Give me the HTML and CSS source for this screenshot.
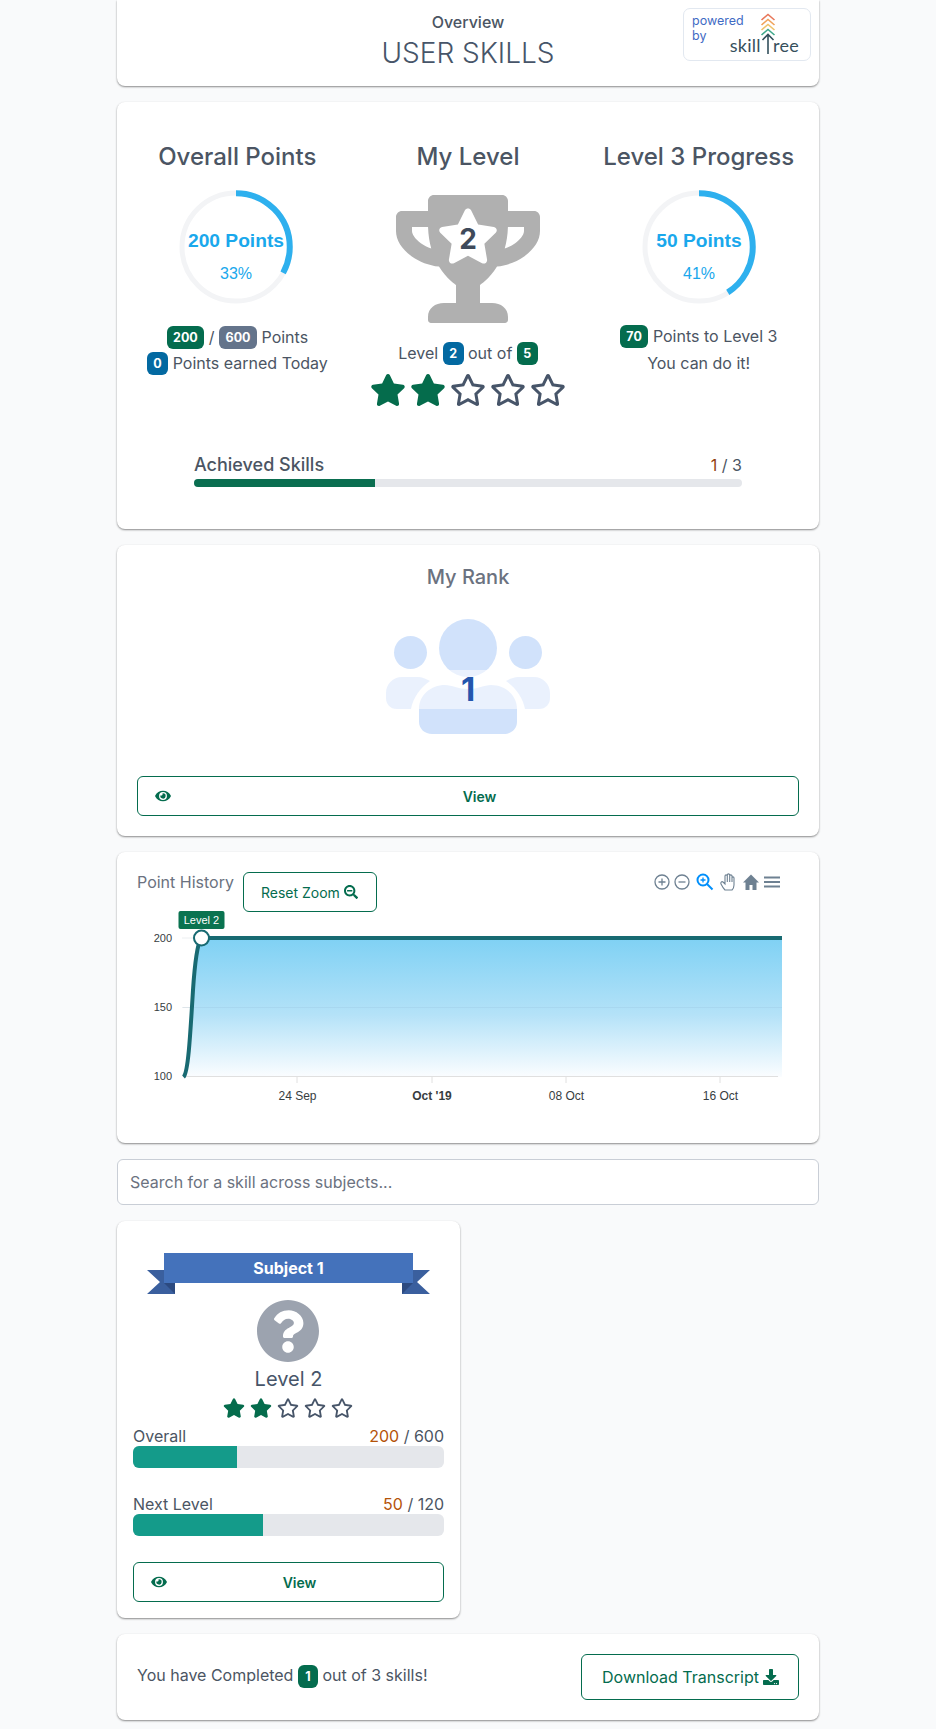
FILE: index.html
```html
<!DOCTYPE html>
<html lang="en">
<head>
<meta charset="utf-8">
<title>User Skills</title>
<link rel="stylesheet" href="styles.css">
</head>
<body>
<svg class="defs" width="0" height="0">
  <defs>
    <symbol id="star" viewBox="0 0 576 512"><path d="M259.3 17.8L194 150.2 47.9 171.5c-26.2 3.8-36.7 36.1-17.7 54.6l105.7 103-25 145.5c-4.5 26.3 23.2 46 46.4 33.7L288 439.6l130.7 68.7c23.2 12.2 50.9-7.4 46.4-33.7l-25-145.5 105.7-103c19-18.5 8.5-50.8-17.7-54.6L382 150.2 316.7 17.8c-11.7-23.6-45.6-23.9-57.4 0z"/></symbol>
    <symbol id="star-o" viewBox="0 0 576 512"><path d="M528.1 171.5L382 150.2 316.7 17.8c-11.7-23.6-45.6-23.9-57.4 0L194 150.2 47.9 171.5c-26.2 3.8-36.7 36.1-17.7 54.6l105.7 103-25 145.5c-4.5 26.3 23.2 46 46.4 33.7L288 439.6l130.7 68.7c23.2 12.2 50.9-7.4 46.4-33.7l-25-145.5 105.7-103c19-18.5 8.5-50.8-17.7-54.6zM388.6 312.3l23.7 138.4L288 385.4l-124.3 65.3 23.7-138.4-100.6-98 139-20.2 62.2-126 62.2 126 139 20.2-100.6 98z"/></symbol>
    <symbol id="eye" viewBox="0 0 576 512"><path d="M572.52 241.4C518.29 135.59 410.93 64 288 64S57.68 135.64 3.48 241.41a32.35 32.35 0 0 0 0 29.19C57.71 376.41 165.07 448 288 448s230.32-71.64 284.52-177.41a32.35 32.35 0 0 0 0-29.19zM288 400a144 144 0 1 1 144-144 143.93 143.93 0 0 1-144 144zm0-240a95.31 95.31 0 0 0-25.31 3.79 47.85 47.85 0 0 1-66.9 66.9A95.78 95.78 0 1 0 288 160z"/></symbol>
  </defs>
</svg>
<main class="page">
  <section class="card head-card">
    <div></div>
    <div class="head-titles">
      <div class="head-over">Overview</div>
      <h1 class="head-title">USER SKILLS</h1>
    </div>
    <div class="powered">
      <div class="powered-text">powered<br>by</div>
      <div class="logo">
        <span class="logo-word">skill</span>
        <svg class="logo-mark" width="16" height="44" viewBox="0 0 16 44" fill="none" stroke-width="1.6">
          <path d="M1.5 7 8 1.5 14.500 7" stroke="#e8775a"/>
          <path d="M1.5 12 8 6.500 14.500 12" stroke="#f0a35a"/>
          <path d="M1.5 17 8 11.500 14.500 17" stroke="#eec26a"/>
          <path d="M1.5 22 8 16.500 14.500 22" stroke="#3fa98c"/>
          <path d="M2.500 27 8 21.500 13.500 27M8 22V41" stroke="#33505c"/>
        </svg>
        <span class="logo-word">ree</span>
      </div>
    </div>
  </section>

  <section class="card stats-card">
    <div class="stats-grid">
      <div class="stat-col">
        <h2 class="stat-title">Overall Points</h2>
        <svg class="donut donut-left" width="114" height="114" viewBox="0 0 114 114">
          <circle class="donut-track" cx="57" cy="57" r="54"/>
          <circle class="donut-value" cx="57" cy="57" r="53.750" pathLength="100" stroke-dasharray="33 100" transform="rotate(-90 57 57)"/>
          <text class="donut-main" x="57" y="50">200 Points</text>
          <text class="donut-sub" x="57" y="89">33%</text>
        </svg>
        <div class="stat-lines lines-left">
          <div><span class="badge badge-green">200</span> / <span class="badge badge-gray">600</span> Points</div>
          <div><span class="badge badge-blue">0</span> Points earned Today</div>
        </div>
      </div>
      <div class="stat-col">
        <h2 class="stat-title">My Level</h2>
        <div class="trophy">
          <svg width="144" height="128" viewBox="0 0 576 512"><path fill="#b0b0b0" d="M552 64H448V24c0-13.300-10.700-24-24-24H152c-13.300 0-24 10.700-24 24v40H24C10.700 64 0 74.700 0 88v56c0 35.700 22.500 72.400 61.900 100.700 31.500 22.700 69.800 37.100 110 41.700C203.300 338.500 240 360 240 360v72h-48c-35.300 0-64 20.700-64 56v12c0 6.600 5.400 12 12 12h296c6.600 0 12-5.400 12-12v-12c0-35.300-28.700-56-64-56h-48v-72s36.700-21.500 68.100-73.600c40.300-4.600 78.600-19 110-41.700 39.300-28.300 61.900-65 61.900-100.700V88c0-13.300-10.700-24-24-24zM99.300 192.800C74.900 175.200 64 155.600 64 144v-16h64.200c1 32.600 5.800 61.200 12.800 86.200-15.100-5.200-29.200-12.400-41.700-21.400zM512 144c0 16.100-17.700 36.100-35.300 48.800-12.500 9-26.700 16.200-41.800 21.400 7-25 11.800-53.600 12.800-86.200H512v16z"/></svg>
          <svg class="trophy-star" width="62" height="56" fill="#fff"><use href="#star"/></svg>
          <span class="trophy-num">2</span>
        </div>
        <div class="stat-lines lines-mid">
          <div>Level <span class="badge badge-blue">2</span> out of <span class="badge badge-green">5</span></div>
        </div>
        <div class="stars stars-lg">
          <svg class="star-on"><use href="#star"/></svg>
          <svg class="star-on"><use href="#star"/></svg>
          <svg class="star-off"><use href="#star-o"/></svg>
          <svg class="star-off"><use href="#star-o"/></svg>
          <svg class="star-off"><use href="#star-o"/></svg>
        </div>
      </div>
      <div class="stat-col">
        <h2 class="stat-title">Level 3 Progress</h2>
        <svg class="donut" width="114" height="114" viewBox="0 0 114 114">
          <circle class="donut-track" cx="57" cy="57" r="54"/>
          <circle class="donut-value" cx="57" cy="57" r="53.750" pathLength="100" stroke-dasharray="41 100" transform="rotate(-90 57 57)"/>
          <text class="donut-main" x="57" y="50">50 Points</text>
          <text class="donut-sub" x="57" y="89">41%</text>
        </svg>
        <div class="stat-lines lines-right">
          <div><span class="badge badge-green">70</span> Points to Level 3</div>
          <div>You can do it!</div>
        </div>
      </div>
    </div>
    <div class="achieved">
      <div class="achieved-row">
        <span class="achieved-label">Achieved Skills</span>
        <span><span class="num-achieved">1</span> / 3</span>
      </div>
      <div class="thin-bar"><div class="thin-fill" style="width:33%"></div></div>
    </div>
  </section>

  <section class="card rank-card">
    <h2 class="rank-title">My Rank</h2>
    <svg class="rank-icon" width="164" height="116" viewBox="386 619 164 116">
      <defs>
        <linearGradient id="rankfill" gradientUnits="userSpaceOnUse" x1="0" y1="619" x2="0" y2="735">
          <stop offset="0.44" stop-color="#d1e2fb"/><stop offset="0.44" stop-color="#eaf1fd"/>
          <stop offset="0.776" stop-color="#eaf1fd"/><stop offset="0.776" stop-color="#d1e2fb"/>
        </linearGradient>
      </defs>
      <g fill="url(#rankfill)">
        <circle cx="468" cy="648" r="29"/>
        <circle cx="410.500" cy="652.500" r="16.500"/>
        <circle cx="525.500" cy="652.500" r="16.500"/>
        <path d="M419 709C419 695 431 685 445 685C452 685 458 689 468 689C478 689 484 685 491 685C505 685 517 695 517 709V722C517 729 511 734 504 734H432C425 734 419 729 419 722Z"/>
        <path d="M386 693C386 684 393 677 402 677H418C422 677 426 679 430 681C420 688 413 698 411 709H397C390 709 386 704 386 698Z"/>
        <path d="M550 693C550 684 543 677 534 677H518C514 677 510 679 506 681C516 688 523 698 525 709H539C546 709 550 704 550 698Z"/>
      </g>
      <text class="rank-num" x="468" y="701">1</text>
    </svg>
    <a class="btn btn-view">
      <svg class="btn-eye" fill="currentColor"><use href="#eye"/></svg>
      <span class="btn-view-label">View</span>
    </a>
  </section>

  <section class="card history-card">
    <div class="history-head">
      <span class="history-title">Point History</span>
      <a class="btn btn-reset">Reset Zoom
        <svg width="14" height="14" viewBox="0 0 512 512" fill="currentColor"><path d="M304 192v32c0 6.600-5.400 12-12 12H124c-6.600 0-12-5.400-12-12v-32c0-6.600 5.400-12 12-12h168c6.600 0 12 5.400 12 12zm201 284.700L476.700 505c-9.400 9.400-24.600 9.400-33.900 0L343 405.300c-4.500-4.500-7-10.600-7-17V372c-35.300 27.600-79.700 44-128 44C93.100 416 0 322.900 0 208S93.100 0 208 0s208 93.100 208 208c0 48.300-16.400 92.700-44 128h16.300c6.400 0 12.500 2.500 17 7l99.700 99.700c9.300 9.400 9.300 24.600 0 34zM344 208c0-75.200-60.800-136-136-136S72 132.800 72 208s60.800 136 136 136 136-60.800 136-136z"/></svg>
      </a>
      <svg class="toolbar" width="130" height="22" viewBox="0 0 130 22" fill="none" stroke="#6e8192" stroke-width="1.300">
        <circle cx="10" cy="11" r="7"/><path d="M6.500 11h7M10 7.500v7"/>
        <circle cx="30" cy="11" r="7"/><path d="M26.500 11h7"/>
        <g stroke="#008ffb" stroke-width="2"><circle cx="51" cy="9" r="5.500"/><path d="M55 13l5.500 5.500"/><path stroke-width="1.300" d="M48.500 9h5M51 6.500v5"/></g>
        <path stroke-width="1.100" d="M69 13c1 2 3 5 4 6h7c1-1 2-3 2-5V7c0-1.500-2-1.500-2 0v-2c0-1.500-2.300-1.500-2.300 0V4c0-1.500-2.400-1.500-2.400 0v1c0-1.500-2.300-1.500-2.300 0v8l-2-2c-1.200-1-2.800.500-2 2zM75.300 5v6M77.700 4v7M80 7v4"/>
        <path fill="#6e8192" stroke="none" d="M99 3.500 91 11.500h2.500V19h4v-5h3v5h4V11.500H107z"/>
        <path stroke-width="2" d="M112 6.500h16M112 11h16M112 15.500h16"/>
      </svg>
    </div>
    <svg class="chart" width="663" height="200" viewBox="137 912 663 200">
      <defs>
        <linearGradient id="areafill" x1="0" y1="0" x2="0" y2="1">
          <stop offset="0" stop-color="#7fd1f4"/><stop offset="0.55" stop-color="#b4e2f8"/><stop offset="1" stop-color="#fbfdff"/>
        </linearGradient>
      </defs>
      <path class="chart-grid" d="M182 938H782M182 1007.500H782"/>
      <path fill="url(#areafill)" d="M183.500 1077C188 1073 190 1040 193 990C195 960 197 945 201 938H782V1077Z"/>
      <path class="chart-grid-over" d="M183 1007.500H782"/>
      <path class="chart-axis" d="M183 1076.500H778M297 1077v6M432 1077v6M566 1077v6M720 1077v6"/>
      <path class="chart-line" d="M183.500 1077C188 1073 190 1040 193 990C195 960 197 945 201 938H782"/>
      <circle class="chart-dot" cx="201.500" cy="938" r="7.500"/>
      <rect x="178.500" y="911" width="46" height="18" rx="2" fill="#0a7350"/>
      <text class="chart-tag" x="201.500" y="924">Level 2</text>
      <text class="chart-y" x="172" y="942">200</text>
      <text class="chart-y" x="172" y="1011">150</text>
      <text class="chart-y" x="172" y="1080">100</text>
      <text class="chart-x" x="297.500" y="1100">24 Sep</text>
      <text class="chart-x chart-x-b" x="432" y="1100">Oct '19</text>
      <text class="chart-x" x="566.500" y="1100">08 Oct</text>
      <text class="chart-x" x="720.500" y="1100">16 Oct</text>
    </svg>
  </section>

  <input class="search" type="text" placeholder="Search for a skill across subjects...">

  <section class="card subject-card">
    <svg class="ribbon" width="283" height="41" viewBox="147 1253 283 41">
      <path fill="#3a5f9e" d="M147 1270H175V1294H147L160 1282Z"/>
      <path fill="#2c4a80" d="M164 1283H175V1294Z"/>
      <path fill="#3a5f9e" d="M430 1270H402V1294H430L417 1282Z"/>
      <path fill="#2c4a80" d="M413 1283H402V1294Z"/>
      <rect x="164" y="1253" width="249" height="30" fill="#4472bb"/>
      <text class="ribbon-text" x="288.500" y="1273.500">Subject 1</text>
    </svg>
    <svg class="question" width="64" height="64" viewBox="0 0 512 512"><path fill="#9ca3af" d="M504 256c0 136.997-111.043 248-248 248S8 392.997 8 256C8 119.083 119.043 8 256 8s248 111.083 248 248zM262.655 90c-54.497 0-89.255 22.957-116.549 63.758-3.536 5.286-2.353 12.415 2.715 16.258l34.699 26.310c5.205 3.947 12.621 3.008 16.665-2.122 17.864-22.658 30.113-35.797 57.303-35.797 20.429 0 45.698 13.148 45.698 32.958 0 14.976-12.363 22.667-32.534 33.976C247.128 238.528 216 254.941 216 296v4c0 6.627 5.373 12 12 12h56c6.627 0 12-5.373 12-12v-1.333c0-28.462 83.186-29.647 83.186-106.667 0-58.002-60.165-102-116.531-102zM256 338c-25.365 0-46 20.635-46 46 0 25.364 20.635 46 46 46s46-20.636 46-46c0-25.365-20.635-46-46-46z"/></svg>
    <div class="subject-level">Level 2</div>
    <div class="stars stars-sm">
      <svg class="star-on"><use href="#star"/></svg>
      <svg class="star-on"><use href="#star"/></svg>
      <svg class="star-off"><use href="#star-o"/></svg>
      <svg class="star-off"><use href="#star-o"/></svg>
      <svg class="star-off"><use href="#star-o"/></svg>
    </div>
    <div class="meter-row meter-first"><span>Overall</span><span><span class="num-earned">200</span> / 600</span></div>
    <div class="meter"><div class="meter-fill" style="width:33.4%"></div></div>
    <div class="meter-row meter-second"><span>Next Level</span><span><span class="num-earned">50</span> / 120</span></div>
    <div class="meter"><div class="meter-fill" style="width:41.7%"></div></div>
    <a class="btn btn-view btn-view-sub">
      <svg class="btn-eye" fill="currentColor"><use href="#eye"/></svg>
      <span class="btn-view-label">View</span>
    </a>
  </section>

  <section class="card done-card">
    <div>You have Completed <span class="badge badge-green">1</span> out of 3 skills!</div>
    <a class="btn btn-download">Download Transcript
      <svg width="16" height="16" viewBox="0 0 512 512" fill="currentColor"><path d="M216 0h80c13.300 0 24 10.700 24 24v168h87.700c17.800 0 26.700 21.500 14.100 34.100L269.700 378.300c-7.500 7.500-19.800 7.500-27.300 0L90.100 226.100c-12.600-12.600-3.700-34.100 14.100-34.100H192V24c0-13.300 10.700-24 24-24zm296 376v112c0 13.300-10.700 24-24 24H24c-13.300 0-24-10.700-24-24V376c0-13.300 10.700-24 24-24h146.700l49 49c20.100 20.100 52.500 20.100 72.600 0l49-49H488c13.300 0 24 10.700 24 24zm-124 88c0-11-9-20-20-20s-20 9-20 20 9 20 20 20 20-9 20-20zm64 0c0-11-9-20-20-20s-20 9-20 20 9 20 20 20 20-9 20-20z"/></svg>
    </a>
  </section>
</main>
</body>
</html>
```
FILE: styles.css
```css
* { box-sizing: border-box; }
html, body { margin: 0; padding: 0; }
body {
  background: #f9fafb;
  color: #4b5563;
  font-family: Inter, "Liberation Sans", sans-serif;
  font-size: 16px;
}
.defs { position: absolute; }
.page {
  width: 702px;
  margin: 0 auto;
  padding-bottom: 9px;
  display: flex;
  flex-direction: column;
  gap: 16px;
}
.card {
  background: #fff;
  border-radius: 8px;
  box-shadow: 0 1px 2px rgba(0, 0, 0, .45);
}
h1, h2 { margin: 0; font-weight: 400; }

/* header */
.head-card {
  height: 86px;
  border-radius: 0 0 8px 8px;
  display: grid;
  grid-template-columns: 1fr auto 1fr;
  padding: 8px 8px 0;
}
.head-titles { text-align: center; padding-top: 5px; }
.head-over { font-size: 16px; font-weight: 500; line-height: 18px; color: #4b5563; }
.head-title { font-size: 28px; font-weight: 300; line-height: 40px; margin-top: 2px; color: #475569; }
.powered {
  justify-self: end;
  width: 128px;
  height: 53px;
  border: 1px solid #e2e8f0;
  border-radius: 7px;
  position: relative;
  padding: 4px 0 0 8px;
}
.powered-text { font-size: 12.500px; line-height: 15px; color: #3f6bc4; }
.logo {
  position: absolute;
  right: 11px;
  top: 4px;
  display: flex;
  align-items: flex-end;
  height: 44px;
}
.logo-word { font-family: Lato, sans-serif; font-weight: 400; font-size: 18px; line-height: 24px; color: #36505c; letter-spacing: .3px; }
.logo-mark { margin: 0 -3px 0 -1px; }

/* stats */
.stats-card { height: 427px; padding: 40px 5px 0; }
.stats-grid { display: grid; grid-template-columns: repeat(3, 1fr); }
.stat-col { display: flex; flex-direction: column; align-items: center; }
.stat-title { font-size: 24px; line-height: 30px; font-weight: 450; color: #4b5563; margin-bottom: 18px; }
.donut { display: block; overflow: visible; }
.donut-left { margin-right: 2px; }
.donut-track { fill: none; stroke: #f3f4f6; stroke-width: 5; }
.donut-value { fill: none; stroke: #2eb0ee; stroke-width: 6; }
.donut-main { font-family: "Liberation Sans", sans-serif; font-weight: 700; font-size: 19.200px; fill: #1aa8ec; text-anchor: middle; dominant-baseline: central; }
.donut-sub { font-family: "Liberation Sans", sans-serif; font-size: 16px; fill: #1aa8ec; text-anchor: middle; }
.stat-lines { text-align: center; line-height: 26px; color: #4b5563; }
.lines-left { margin-top: 20px; }
.lines-right { margin-top: 19px; line-height: 27px; }
.lines-mid { margin-top: 17px; }
.badge {
  display: inline-block;
  vertical-align: middle;
  min-width: 20px;
  height: 23px;
  line-height: 23px;
  padding: 0 6.500px;
  border-radius: 6px;
  color: #fff;
  font-size: 12.500px;
  font-weight: 700;
  text-align: center;
  position: relative;
  top: -1px;
}
.badge-green { background: #046c4e; }
.badge-gray { background: #64748b; }
.badge-blue { background: #0369a1; }
.trophy { position: relative; width: 144px; height: 128px; margin-top: 5px; }
.trophy > svg { display: block; }
.trophy-star { position: absolute; left: 41px; top: 13px; }
.trophy-num { position: absolute; left: 0; right: 0; top: 24px; text-align: center; font-size: 28px; line-height: 40px; font-weight: 700; color: #3f4a5a; }
.stars { display: flex; justify-content: center; }
.stars-lg { gap: 4px; margin-top: 8px; }
.stars-lg svg { width: 36px; height: 32px; }
.stars-sm { gap: 5px; margin-top: 5px; margin-right: 1px; }
.stars-sm svg { width: 22px; height: 20px; }
.star-on { fill: #056c4c; }
.star-off { fill: #475569; }
.achieved { margin: 47px 72px 0; }
.achieved-row { display: flex; justify-content: space-between; line-height: 24px; color: #4b5563; }
.achieved-label { font-size: 18px; font-weight: 450; }
.num-achieved { color: #92400e; }
.thin-bar { height: 8px; margin-top: 2px; background: #e5e7eb; border-radius: 4px; overflow: hidden; }
.thin-fill { height: 100%; background: #0a6e50; }

/* rank */
.rank-card { height: 291px; padding: 18px 20px 0; display: flex; flex-direction: column; align-items: center; }
.rank-title { font-size: 20px; line-height: 28px; font-weight: 450; color: #6b7280; }
.rank-icon { margin-top: 28px; display: block; }
.rank-num { font-size: 33px; font-weight: 700; fill: #2456ad; text-anchor: middle; }

.btn {
  display: flex;
  align-items: center;
  border: 1px solid #046c4e;
  border-radius: 6px;
  color: #046c4e;
  background: #fff;
}
.btn-view { align-self: stretch; height: 40px; margin-top: 41px; padding: 0 10px 0 17px; font-size: 14px; font-weight: 600; }
.btn-eye { width: 16px; height: 14px; }
.btn-view-label { flex: 1; text-align: center; }
.btn-view-sub { margin-top: 26px; padding: 0 11px 0 17px; }

/* history */
.history-card { height: 291px; padding: 20px 20px 0; }
.history-head { display: flex; align-items: flex-start; height: 40px; }
.history-title { line-height: 20px; color: #6b7280; }
.btn-reset { height: 40px; margin-left: 9px; padding: 0 18px 0 17px; gap: 4px; font-size: 14px; }
.toolbar { margin-left: auto; margin-right: 17px; margin-top: -1px; }
.chart { display: block; overflow: visible; }
.chart-grid { stroke: #eceff1; fill: none; }
.chart-grid-over { stroke: rgba(120, 160, 190, .12); fill: none; }
.chart-axis { stroke: #e0e0e0; fill: none; }
.chart-line { stroke: #186a72; stroke-width: 4; fill: none; }
.chart-dot { fill: #fff; stroke: #186a72; stroke-width: 2; }
.chart-tag { font-family: "Liberation Sans", sans-serif; font-size: 11px; fill: #fff; text-anchor: middle; }
.chart-y { font-family: "Liberation Sans", sans-serif; font-size: 11px; fill: #373d3f; text-anchor: end; }
.chart-x { font-family: "Liberation Sans", sans-serif; font-size: 12px; fill: #373d3f; text-anchor: middle; }
.chart-x-b { font-weight: 700; }

/* search */
.search {
  height: 46px;
  width: 100%;
  padding: 0 12px;
  border: 1px solid #c9ced6;
  border-radius: 6px;
  background: #fff;
  font-family: inherit;
  font-size: 16px;
  color: #4b5563;
}
.search::placeholder { color: #6b7280; opacity: 1; }

/* subject */
.subject-card { width: 343px; height: 397px; padding: 32px 16px 0; display: flex; flex-direction: column; align-items: center; }
.ribbon { display: block; flex: none; }
.ribbon-text { font-size: 16px; font-weight: 700; fill: #fff; text-anchor: middle; }
.question { display: block; margin-top: 5px; margin-right: 1px; flex: none; }
.subject-level { font-size: 20px; line-height: 27px; margin-top: 3px; color: #475569; }
.meter-row { align-self: stretch; display: flex; justify-content: space-between; line-height: 18px; }
.meter-first { margin-top: 9px; }
.meter-second { margin-top: 27px; }
.num-earned { color: #b45309; }
.meter { align-self: stretch; height: 22px; background: #e5e7eb; border-radius: 6px; overflow: hidden; margin-top: 1px; }
.meter-fill { height: 100%; background: #149b8a; }

/* completed */
.done-card { height: 86px; padding: 20px; display: flex; align-items: center; justify-content: space-between; color: #4b5563; }
.btn-download { height: 46px; padding: 0 19px 0 20px; gap: 4px; }
```
